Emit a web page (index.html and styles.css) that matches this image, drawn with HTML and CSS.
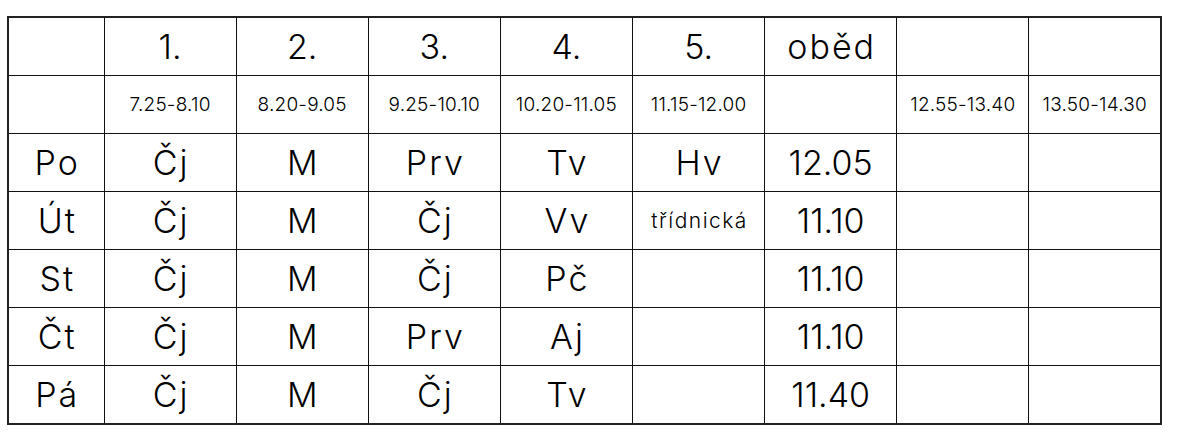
FILE: index.html
```html
<!DOCTYPE html>
<html lang="cs">
<head>
<meta charset="utf-8">
<title>Rozvrh</title>
<link rel="stylesheet" href="styles.css">
</head>
<body>
<div class="page">
<table class="rozvrh">
  <colgroup>
    <col class="c-day">
    <col span="8" class="c-hour">
  </colgroup>
  <tr class="big">
    <td></td><td class="num">1.</td><td class="num">2.</td><td class="num">3.</td><td class="num">4.</td><td class="num">5.</td><td>oběd</td><td></td><td></td>
  </tr>
  <tr class="small">
    <td></td><td>7.25-8.10</td><td>8.20-9.05</td><td>9.25-10.10</td><td>10.20-11.05</td><td>11.15-12.00</td><td></td><td>12.55-13.40</td><td>13.50-14.30</td>
  </tr>
  <tr class="big">
    <td>Po</td><td>Čj</td><td>M</td><td>Prv</td><td>Tv</td><td>Hv</td><td class="num">12.05</td><td></td><td></td>
  </tr>
  <tr class="big">
    <td>Út</td><td>Čj</td><td>M</td><td>Čj</td><td>Vv</td><td class="note">třídnická</td><td class="num">11.10</td><td></td><td></td>
  </tr>
  <tr class="big">
    <td>St</td><td>Čj</td><td>M</td><td>Čj</td><td>Pč</td><td></td><td class="num">11.10</td><td></td><td></td>
  </tr>
  <tr class="big">
    <td>Čt</td><td>Čj</td><td>M</td><td>Prv</td><td>Aj</td><td></td><td class="num">11.10</td><td></td><td></td>
  </tr>
  <tr class="big">
    <td>Pá</td><td>Čj</td><td>M</td><td>Čj</td><td>Tv</td><td></td><td class="num">11.40</td><td></td><td></td>
  </tr>
</table>
</div>
</body>
</html>
```

FILE: styles.css
```css
html, body {
  margin: 0;
  padding: 0;
  background: #fff;
}

.page {
  padding: 16px 0 0 7px;
}

.rozvrh {
  border-collapse: collapse;
  table-layout: fixed;
  width: 1155px;
  border: 2px solid #222;
  font-family: Inter, "Noto Sans", sans-serif;
  font-weight: 300;
  color: #000;
}

.c-day {
  width: 96px;
}

.rozvrh td {
  border: 1px solid #111;
  height: 57px;
  padding: 0;
  text-align: center;
  vertical-align: middle;
  white-space: nowrap;
}

.big td {
  font-size: 34px;
  letter-spacing: 2px;
  padding-left: 2px;
}

.big td.num {
  letter-spacing: 0;
  padding-left: 0;
}

.small td {
  font-size: 19px;
  letter-spacing: 0.2px;
}

.big td.note {
  font-size: 21px;
  letter-spacing: 1.5px;
  padding-left: 2px;
}
```
